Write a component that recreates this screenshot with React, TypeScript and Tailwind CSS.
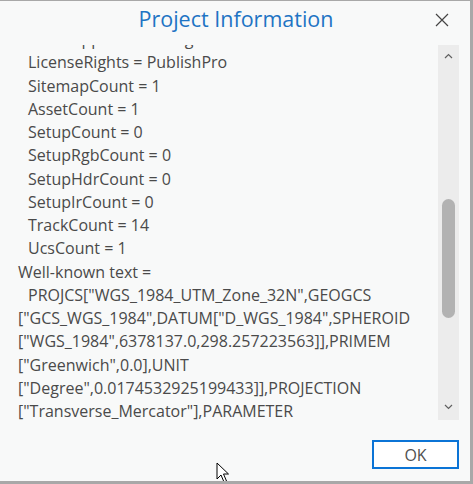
import React from 'react';

const props: string[] = [
  'ViewSupportedSettings = 1',
  'LicenseRights = PublishPro',
  'SitemapCount = 1',
  'AssetCount = 1',
  'SetupCount = 0',
  'SetupRgbCount = 0',
  'SetupHdrCount = 0',
  'SetupIrCount = 0',
  'TrackCount = 14',
  'UcsCount = 1',
];

const wkt =
  'PROJCS["WGS_1984_UTM_Zone_32N",GEOGCS ["GCS_WGS_1984",DATUM["D_WGS_1984",SPHEROID ["WGS_1984",6378137.0,298.257223563]],PRIMEM ["Greenwich",0.0],UNIT ["Degree",0.0174532925199433]],PROJECTION ["Transverse_Mercator"],PARAMETER ["False_Easting",500000.0],PARAMETER ["False_Northing",0.0]';

const Chevron = ({ up }: { up?: boolean }) => (
  <svg width="9" height="6" viewBox="0 0 9 6" className="block">
    <path
      d={up ? 'M1 5 L4.5 1.5 L8 5' : 'M1 1 L4.5 4.5 L8 1'}
      fill="none"
      stroke="#606060"
      strokeWidth="1.2"
    />
  </svg>
);

const App: React.FC = () => {
  return (
    <div
      className="relative w-[473px] h-[484px] bg-[#f8f9f9] border-t border-[#a8a8a8] border-r-[3px] border-b-[3px] flex flex-col overflow-hidden"
      style={{ fontFamily: '"Open Sans", "Noto Sans", sans-serif' }}
    >
      {/* title bar */}
      <div className="relative h-[44px] shrink-0 flex items-center justify-center">
        <h1 className="text-[21.5px] text-[#1e74c4] leading-none pb-[8px] pl-[2px]">Project Information</h1>
        <button className="absolute right-[21px] top-[12px] w-[14px] h-[14px]">
          <svg width="14" height="14" viewBox="0 0 14 14">
            <path d="M1 1 L13 13 M13 1 L1 13" stroke="#444" strokeWidth="1.2" fill="none" />
          </svg>
        </button>
      </div>

      {/* body */}
      <div className="h-[375px] shrink-0 flex">
        <div className="flex-1 overflow-hidden pl-[18px] pr-[10px]">
          <div className="-mt-[17px] text-[16px] leading-[23.25px] text-[#4a4a4a]">
            {props.map((p) => (
              <div key={p} className="pl-[10px] whitespace-nowrap">
                {p}
              </div>
            ))}
            <div>Well-known text =</div>
            <div className="indent-[10px] break-words">{wkt}</div>
          </div>
        </div>

        {/* scrollbar */}
        <div className="w-[21px] mr-[11px] bg-[#ececec] flex flex-col items-center">
          <div className="h-[20px] flex items-center justify-center pt-[2px]">
            <Chevron up />
          </div>
          <div className="flex-1 w-full relative">
            <div className="absolute left-[4px] top-[134px] w-[13px] h-[119px] rounded-full bg-[#b2b2b2]" />
          </div>
          <div className="h-[22px] flex items-center justify-center pb-[4px]">
            <Chevron />
          </div>
        </div>
      </div>

      {/* footer */}
      <div className="flex-1 flex justify-end pr-[11px] pt-[20px]">
        <button className="w-[87px] h-[29px] border-2 border-[#0b74d6] bg-white text-[16px] text-[#505050] leading-none">
          OK
        </button>
      </div>

      {/* mouse cursor */}
      <svg className="absolute left-[216px] top-[461px]" width="14" height="22" viewBox="0 0 14 22">
        <path
          d="M1 1 L1 17 L5 13 L8 20 L10.5 19 L7.5 12 L12.5 12 Z"
          fill="#fff"
          stroke="#000"
          strokeWidth="1"
          strokeLinejoin="miter"
        />
      </svg>
    </div>
  );
};

export default App;
